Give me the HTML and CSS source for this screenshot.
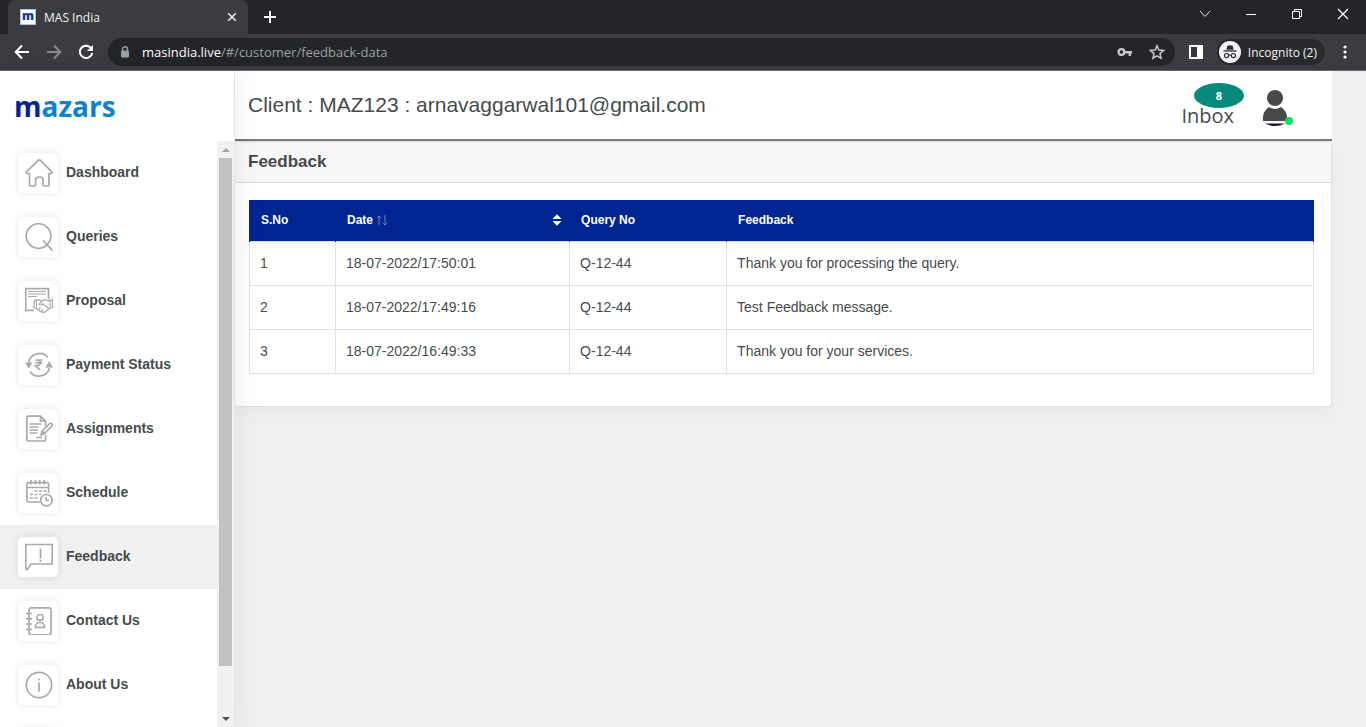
FILE: index.html
```html
<!DOCTYPE html>
<html lang="en">
<head>
<meta charset="utf-8">
<title>MAS India</title>
<link rel="stylesheet" href="styles.css">
</head>
<body>
<header class="browser">
  <div class="tabstrip">
    <div class="tab">
      <span class="favicon">m</span>
      <span class="tab-title">MAS India</span>
      <button class="icon-btn tab-close" aria-label="Close tab"><svg width="10" height="10" viewBox="0 0 10 10"><path d="M1.200 1.200l7.600 7.600M8.800 1.200L1.200 8.800" stroke="#e8eaed" stroke-width="1.600"/></svg></button>
    </div>
    <button class="icon-btn new-tab" aria-label="New tab"><svg width="14" height="14" viewBox="0 0 14 14"><path d="M7 1v12M1 7h12" stroke="#fff" stroke-width="2"/></svg></button>
    <div class="window-controls">
      <button class="icon-btn" aria-label="Search tabs"><svg width="12" height="12" viewBox="0 0 12 12"><path d="M1 3l5 5.500L11 3" fill="none" stroke="#e5e6e8"/></svg></button>
      <button class="icon-btn" aria-label="Minimise"><svg width="12" height="12" viewBox="0 0 12 12"><path d="M1 6.500h10" stroke="#fff"/></svg></button>
      <button class="icon-btn" aria-label="Restore"><svg width="12" height="12" viewBox="0 0 12 12"><path d="M1.500 3.500h7v7h-7zM3.500 3V1.500h7v7H9" fill="none" stroke="#fff"/></svg></button>
      <button class="icon-btn" aria-label="Close"><svg width="12" height="12" viewBox="0 0 12 12"><path d="M1 1l10 10M11 1L1 11" stroke="#fff" stroke-width="1.200"/></svg></button>
    </div>
  </div>
  <div class="toolbar">
    <button class="icon-btn nav-btn" aria-label="Back"><svg width="16" height="16" viewBox="0 0 16 16"><path d="M15 8H2M8 1.500L1.700 8 8 14.500" fill="none" stroke="#fff" stroke-width="2"/></svg></button>
    <button class="icon-btn nav-btn" aria-label="Forward"><svg width="16" height="16" viewBox="0 0 16 16"><path d="M1 8h13M8 1.500L14.300 8 8 14.500" fill="none" stroke="#8a8b8e" stroke-width="2"/></svg></button>
    <button class="icon-btn nav-btn" aria-label="Reload"><svg width="16" height="16" viewBox="0 0 16 16"><path d="M13.300 4.500A6.200 6.200 0 1 0 14.200 9" fill="none" stroke="#fff" stroke-width="2"/><path d="M15 1v6H9z" fill="#fff"/></svg></button>
    <div class="omnibox">
      <svg width="10" height="12" viewBox="0 0 10 12"><path d="M2.500 5V3.200a2.500 2.500 0 0 1 5 0V5" fill="none" stroke="#9aa0a6" stroke-width="1.400"/><rect x="1" y="4.500" width="8" height="7" rx="1" fill="#9aa0a6"/></svg>
      <span class="url"><span class="host">masindia.live</span>/#/customer/feedback-data</span>
      <svg class="key" width="16" height="10" viewBox="0 0 16 10"><circle cx="4.500" cy="5" r="2.900" fill="none" stroke="#c6c8cb" stroke-width="2.400"/><path d="M8 4h7v2.500h-1V9h-2.400V6.500H8z" fill="#c6c8cb"/></svg>
      <svg width="16" height="16" viewBox="0 0 16 16"><path d="M8 1.800l1.800 4.300 4.700.4-3.500 3.100 1 4.600L8 11.800l-4 2.400 1-4.600-3.500-3.100 4.700-.4z" fill="none" stroke="#c6c8cb" stroke-width="1.500"/></svg>
    </div>
    <button class="icon-btn side-panel" aria-label="Side panel"><svg width="14" height="14" viewBox="0 0 14 14"><rect width="14" height="14" fill="#fff"/><rect x="2" y="2" width="6" height="10" fill="#35363a"/></svg></button>
    <button class="incognito"><svg width="22" height="22" viewBox="0 0 22 22"><circle cx="11" cy="11" r="11" fill="#f1f3f4"/><path d="M7.300 8.700L8.500 4.600h5l1.200 4.100z" fill="#2b2c30"/><path d="M4.500 10h13" stroke="#2b2c30" stroke-width="1.300"/><circle cx="7.600" cy="14.600" r="2.100" fill="none" stroke="#2b2c30" stroke-width="1.200"/><circle cx="14.400" cy="14.600" r="2.100" fill="none" stroke="#2b2c30" stroke-width="1.200"/><path d="M9.600 14.300q1.400-.8 2.800 0" fill="none" stroke="#2b2c30"/></svg><span>Incognito (2)</span></button>
    <button class="icon-btn menu" aria-label="Menu"><svg width="4" height="14" viewBox="0 0 4 14"><g fill="#fff"><circle cx="2" cy="2" r="1.600"/><circle cx="2" cy="7" r="1.600"/><circle cx="2" cy="12" r="1.600"/></g></svg></button>
  </div>
</header>

<div class="app">
  <aside class="sidebar">
    <div class="brand"><span class="brand-m">m</span>azars</div>
    <div class="menu-area">
      <ul class="menu-list">
        <li><a class="item" href="#dashboard"><span class="tile"><svg viewBox="0 0 28 28"><path d="M4.500 14.500H2.200a1 1 0 0 1-.7-1.700L13.200 1.400a1.600 1.600 0 0 1 2.200 0L26.800 12.800a1 1 0 0 1-.6 1.700H24v11.300q0 1.200-1.200 1.200h-3.600q-1.200 0-1.200-1.200V20.500q0-2.500-3.700-2.500t-3.700 2.500v5.300q0 1.200-1.200 1.200H5.700q-1.200 0-1.200-1.200z"/></svg></span><span>Dashboard</span></a></li>
        <li><a class="item" href="#queries"><span class="tile"><svg viewBox="0 0 28 28"><circle cx="13.500" cy="13" r="12.300"/><path d="M18 17.500l9.500 10"/></svg></span><span>Queries</span></a></li>
        <li><a class="item" href="#proposal"><span class="tile"><svg viewBox="0 0 28 28"><path d="M23.500 12V1.700H.7v21.600H9"/><path d="M3 4.500h18M3 7h18M3 9.500h9" stroke-width="1.200"/><path d="M9.500 13.500l4-.8 3.500 1.500 3-1.500 3.500 1 4-1.200v8l-3 1-5.500 4-4-1-4-3.500-2-.5z" fill="#fff" stroke-width="1.300"/><path d="M11.500 13.500v7M17 14.200l-3 3.300q2 1.300 4-.8l6 5M25 13.500v7M13.500 22.500l2-2M16 24.500l2-2.500" stroke-width="1.200"/></svg></span><span>Proposal</span></a></li>
        <li><a class="item" href="#payment"><span class="tile"><svg viewBox="0 0 28 28"><path d="M3.700 11.500A11 11 0 0 1 23 6.500M24.500 17A11 11 0 0 1 5 20.500"/><path d="M0 11.500h7.500l-3.700 6zM20.500 16.500H28l-3.700-6.500z" fill="#aaa" stroke="none"/><path d="M10.500 9h7M10.500 11.800h7M10.500 9q5 0 5 2.800t-5 2.900l4.500 4.300"/></svg></span><span>Payment Status</span></a></li>
        <li><a class="item" href="#assignments"><span class="tile"><svg viewBox="0 0 28 28"><path d="M20.500 11V6l-5-4.800H3.200Q1.800 1.200 1.800 2.600v22q0 1.400 1.400 1.400h16q1.400 0 1.400-1.400V20M15.500 1.500V6h5"/><path d="M4.500 9h12M4.500 12h9M4.500 15h8.500M4.500 18h8M11 22.500h6"/><path d="M16 20l1.300-4 7.500-7.500q1.500-.8 2.300.8.400 1-.3 1.700L19.500 18.500zM17.500 16l2 2.300"/></svg></span><span>Assignments</span></a></li>
        <li><a class="item" href="#schedule"><span class="tile"><svg viewBox="0 0 28 28"><path d="M15 23H3.200q-1.400 0-1.400-1.400V5q0-1.400 1.400-1.400h19Q23.600 3.600 23.600 5v9M1.800 8.500h21.800M6 1v4.500M10.300 1v4.500M14.700 1v4.500M19 1v4.500"/><path d="M9.500 12h3M14 12h3M18.500 12h3M5 15.500h3M9.500 15.500h3M14 15.500h2M5 19h3M9.500 19h3"/><circle cx="21.500" cy="21.200" r="5.700"/><path d="M21.200 18v3.500h3"/></svg></span><span>Schedule</span></a></li>
        <li><a class="item active" href="#feedback" aria-current="page"><span class="tile"><svg viewBox="0 0 28 28"><path d="M.8 26V1.500h26.400V21H6L2.500 26.300Q1.300 27.300.8 26z"/><path d="M15.500 5.500v10M15.500 16.700V19"/></svg></span><span>Feedback</span></a></li>
        <li><a class="item" href="#contact"><span class="tile"><svg viewBox="0 0 28 28"><rect x="4" y=".8" width="22" height="27" rx="2.200"/><path d="M1 6.500h6M1 11.800h6M1 17h6M1 22.500h6"/><circle cx="15" cy="10.500" r="3"/><path d="M10.500 20.500v-1.300a4.500 3.700 0 0 1 9 0v1.300z"/></svg></span><span>Contact Us</span></a></li>
        <li><a class="item" href="#about"><span class="tile"><svg viewBox="0 0 28 28"><circle cx="14" cy="14" r="12.700"/><path d="M14 7.500v2M14 11.500v9.300"/></svg></span><span>About Us</span></a></li>
        <li class="item"><span class="tile"></span></li>
      </ul>
      <div class="scrollbar" aria-hidden="true">
        <span class="arrow"><svg width="8" height="4" viewBox="0 0 8 4"><path d="M0 4l4-4 4 4z" fill="#a3a3a3"/></svg></span>
        <span class="track"><span class="thumb"></span></span>
        <span class="arrow"><svg width="8" height="4" viewBox="0 0 8 4"><path d="M0 0l4 4 4-4z" fill="#505050"/></svg></span>
      </div>
    </div>
  </aside>

  <main class="content">
    <div class="topbar">
      <h1>Client : MAZ123 : arnavaggarwal101@gmail.com</h1>
      <div class="account">
        <a class="inbox" href="#inbox">Inbox<span class="badge">8</span></a>
        <button class="icon-btn avatar" aria-label="Account"><svg width="32" height="38" viewBox="0 0 32 38"><circle cx="13" cy="9" r="8" fill="#48494b"/><path d="M7 18q6 4 12 0 7 4.500 6 14H1Q0 22.500 7 18z" fill="#48494b"/><path d="M3 34.500h20q-10 5-20 0z" fill="#16163a"/><circle cx="27" cy="32" r="4" fill="#00e05c"/></svg></button>
      </div>
    </div>
    <section class="card">
      <h2>Feedback</h2>
      <div class="card-body">
        <table>
          <thead>
            <tr><th class="c-no">S.No</th><th class="c-date"><button class="sort"><span>Date <svg width="12" height="12" viewBox="0 0 12 12"><path d="M3 11V2M1 4l2-2 2 2M9 1v10M7 9l2 2 2-2" fill="none" stroke="#7584c6"/></svg></span><svg width="10" height="12" viewBox="0 0 10 12"><path d="M.5 5L5 .3 9.500 5zM.5 7L5 11.700 9.500 7z" fill="#fff"/></svg></button></th><th class="c-query">Query No</th><th>Feedback</th></tr>
          </thead>
          <tbody>
            <tr><td>1</td><td>18-07-2022/17:50:01</td><td>Q-12-44</td><td>Thank you for processing the query.</td></tr>
            <tr><td>2</td><td>18-07-2022/17:49:16</td><td>Q-12-44</td><td>Test Feedback message.</td></tr>
            <tr><td>3</td><td>18-07-2022/16:49:33</td><td>Q-12-44</td><td>Thank you for your services.</td></tr>
          </tbody>
        </table>
      </div>
    </section>
  </main>
</div>
</body>
</html>
```
FILE: styles.css
```css
* { box-sizing: border-box; }

body {
  margin: 0;
  height: 100vh;
  display: flex;
  flex-direction: column;
  overflow: hidden;
  background: #f0f0f0;
  color: #464b4b;
  font-family: "Liberation Sans", Arial, sans-serif;
  font-size: 14px;
}

svg { display: block; flex: none; }
button { font: inherit; color: inherit; }
a { color: inherit; text-decoration: none; }

.icon-btn {
  display: flex;
  align-items: center;
  justify-content: center;
  padding: 0;
  border: 0;
  background: none;
}

/* Browser frame */
.browser {
  flex: none;
  background: #3b3c40;
  border-bottom: 1px solid #68646a;
  color: #f1f1f1;
  font-family: "Open Sans", "Noto Sans", sans-serif;
  font-size: 12px;
}

.tabstrip {
  display: flex;
  height: 34px;
  padding-left: 8px;
  background: #242529;
}

.tab {
  display: flex;
  align-items: center;
  gap: 8px;
  width: 240px;
  padding: 0 11px 0 12px;
  border-radius: 8px 8px 0 0;
  background: #3b3c40;
}

.favicon {
  width: 16px;
  height: 16px;
  border: 1px solid #9fc9ec;
  background: #fff;
  color: #16349c;
  font-weight: 800;
  line-height: 11px;
  text-align: center;
}

.tab-title { flex: 1; }
.new-tab { width: 44px; }
.window-controls { display: flex; margin-left: auto; padding-bottom: 6px; }
.window-controls .icon-btn { width: 46px; }

.toolbar {
  display: flex;
  align-items: center;
  height: 36px;
  padding: 0 12px 0 6px;
}

.nav-btn { width: 32px; height: 28px; }

.omnibox {
  flex: 1;
  display: flex;
  align-items: center;
  gap: 12px;
  height: 28px;
  margin-left: 6px;
  padding: 0 10px 0 12px;
  border-radius: 14px;
  background: #242529;
}

.url { flex: 1; color: #9aa0a6; font-size: 13px; }
.host { color: #fff; }
.key { margin-right: 4px; }
.side-panel { width: 42px; }

.incognito {
  display: flex;
  align-items: center;
  gap: 7px;
  height: 26px;
  padding: 0 8px 0 2px;
  border: 0;
  border-radius: 13px;
  background: #28292d;
}

.menu { width: 18px; margin-left: 11px; }

/* Application */
.app { flex: 1; display: flex; min-height: 0; }

.sidebar {
  position: relative;
  z-index: 1;
  flex: none;
  display: flex;
  flex-direction: column;
  width: 235px;
  border-right: 1px solid #e4e5ee;
  background: #fff;
  box-shadow: 0 0 28px rgba(0, 0, 0, 0.08);
}

.brand {
  flex: none;
  height: 70px;
  padding-left: 14px;
  color: #0c82d4;
  font-family: "Open Sans", "Noto Sans", sans-serif;
  font-size: 28px;
  font-weight: 700;
  line-height: 70px;
}

.brand-m { color: #06228f; }

.menu-area { flex: 1; display: flex; min-height: 0; }

.menu-list {
  flex: 1;
  margin: 0;
  padding: 0;
  overflow: hidden;
  list-style: none;
}

.item {
  display: flex;
  align-items: center;
  gap: 8px;
  height: 64px;
  padding-left: 18px;
  font-weight: 700;
}

.item > span:last-child:not(.tile) { padding-bottom: 2px; }
.item.active { background: #f0f0f0; }

.tile {
  display: grid;
  place-items: center;
  width: 40px;
  height: 40px;
  border-radius: 5px;
  background: #fff;
  box-shadow: 0 0 8px rgba(0, 0, 0, 0.1);
}

.tile svg {
  width: 28px;
  height: 28px;
  margin-left: 2px;
  fill: none;
  stroke: #aaa;
  stroke-width: 1.700;
}

.scrollbar {
  display: flex;
  flex-direction: column;
  width: 17px;
  background: #f1f1f1;
}

.arrow { display: grid; place-items: center; height: 17px; }
.track { flex: 1; padding: 0 2px; }
.thumb { display: block; height: 92%; background: #c1c1c1; }

.content { flex: 1; min-width: 0; padding-right: 34px; }

.topbar {
  display: flex;
  align-items: center;
  justify-content: space-between;
  height: 70px;
  padding: 0 38px 0 13px;
  border-bottom: 2px solid #7d7979;
  background: #fff;
}

h1 { margin: 0; font-size: 21px; font-weight: 400; }

.account { display: flex; align-items: center; gap: 28px; padding-top: 6px; }

.inbox {
  position: relative;
  padding-top: 16px;
  font-family: "Open Sans", "Noto Sans", sans-serif;
  font-size: 20px;
  line-height: 24px;
}

.badge {
  position: absolute;
  top: -5px;
  right: -10px;
  width: 50px;
  height: 25px;
  border-radius: 50%;
  background: #058a7b;
  color: #fff;
  font-size: 11px;
  font-weight: 700;
  line-height: 25px;
  text-align: center;
}

.card {
  border: 1px solid #dedfe0;
  border-left: 0;
  border-radius: 4px;
  background: #fff;
  box-shadow: 0 8px 16px rgba(40, 42, 53, 0.03);
}

h2 {
  margin: 0;
  padding: 0 13px;
  border-bottom: 1px solid #d9d9d9;
  background: #f7f7f7;
  font-size: 17px;
  line-height: 40px;
}

.card-body { padding: 17px 17px 32px 14px; }

table {
  width: 100%;
  border-collapse: collapse;
  table-layout: fixed;
}

th {
  height: 41px;
  padding: 0 11px;
  border: 1px solid #002490;
  border-width: 0 1px;
  background: #002490;
  color: #fff;
  font-size: 12px;
  text-align: left;
}

.c-no { width: 86px; }
.c-date { width: 22%; padding-right: 7px; }
.c-query { width: 157px; }

td {
  height: 44px;
  padding: 0 10px;
  border: 1px solid #dee2e6;
}

.sort {
  display: flex;
  align-items: center;
  justify-content: space-between;
  width: 100%;
  padding: 0;
  border: 0;
  background: none;
}

.sort span { display: flex; align-items: center; gap: 3px; }
```
